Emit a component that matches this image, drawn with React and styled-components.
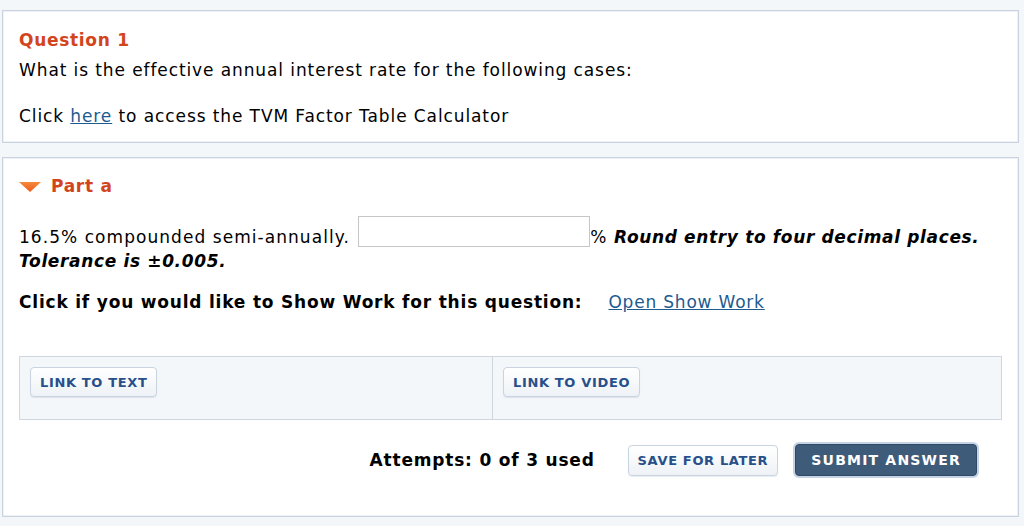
import React from 'react'
import styled, { createGlobalStyle } from 'styled-components'

const GlobalStyle = createGlobalStyle`
  html, body {
    margin: 0;
    padding: 0;
    background: #f4f7fa;
  }
  body {
    font-family: "DejaVu Sans", Verdana, sans-serif;
    color: #000;
  }
`

export default function App() {
  return (
    <Page>
      <GlobalStyle />
      <Card>
        <Heading>Question 1</Heading>
        <Text>What is the effective annual interest rate for the following cases:</Text>
        <Text $gap={23}>
          Click <Link href="#">here</Link> to access the TVM Factor Table Calculator
        </Text>
      </Card>

      <Card $part>
        <PartHeading>
          <Caret width="22" height="10" viewBox="0 0 22 10">
            <defs>
              <linearGradient id="caretFill" x1="0" y1="0" x2="0" y2="1">
                <stop offset="0" stopColor="#f58a3c" />
                <stop offset="1" stopColor="#ee5a1c" />
              </linearGradient>
            </defs>
            <path d="M0 0 H22 L11 10 Z" fill="url(#caretFill)" />
          </Caret>
          Part a
        </PartHeading>

        <Answer>
          16.5% compounded semi-annually. <Entry type="text" />%{' '}
          <Strong>Round entry to four decimal places. Tolerance is ±0.005.</Strong>
        </Answer>

        <ShowWork>
          <b>Click if you would like to Show Work for this question:</b>
          <Link href="#">Open Show Work</Link>
        </ShowWork>

        <Resources>
          <Cell>
            <LightButton>LINK TO TEXT</LightButton>
          </Cell>
          <Cell>
            <LightButton>LINK TO VIDEO</LightButton>
          </Cell>
        </Resources>

        <Footer>
          <Attempts>Attempts: 0 of 3 used</Attempts>
          <LightButton $footer>SAVE FOR LATER</LightButton>
          <SubmitButton>SUBMIT ANSWER</SubmitButton>
        </Footer>
      </Card>
    </Page>
  )
}

const Page = styled.div`
  padding: 10px 5px 10px 2px;
  display: flex;
  flex-direction: column;
  gap: 14px;
`

const Card = styled.section`
  background: #fff;
  border: 1px solid #c9d3df;
  box-shadow: inset 0 0 0 1px #eef2f7;
  padding: ${p => (p.$part ? '17px 16px 16px' : '18px 16px 14px')};
`

const Heading = styled.h2`
  margin: 0 0 7px;
  font-size: 17px;
  line-height: 23px;
  font-weight: bold;
  letter-spacing: 0.7px;
  color: #d2451c;
`

const Text = styled.p`
  margin: ${p => (p.$gap ? `${p.$gap}px 0 0` : '0')};
  font-size: 17px;
  line-height: 23px;
  letter-spacing: 0.9px;
`

const Link = styled.a`
  color: #1d5b8f;
  text-decoration: underline;
`

const PartHeading = styled.h3`
  display: flex;
  align-items: center;
  gap: 10px;
  margin: 0 0 18px;
  font-size: 17px;
  line-height: 23px;
  font-weight: bold;
  letter-spacing: 0.7px;
  color: #d2451c;
`

const Caret = styled.svg`
  display: block;
  flex: none;
`

const Answer = styled.p`
  margin: 0;
  font-size: 17px;
  line-height: 24px;
  letter-spacing: 1.05px;
`

const Entry = styled.input`
  box-sizing: border-box;
  width: 232px;
  height: 31px;
  margin: 0 0 0 2px;
  padding: 2px 4px;
  border: 1px solid #c6c6c6;
  background: #fff;
  vertical-align: text-bottom;
  font: inherit;
`

const Strong = styled.b`
  font-style: italic;
  letter-spacing: 0.65px;
`

const ShowWork = styled.p`
  display: flex;
  gap: 26px;
  margin: 18px 0 0;
  font-size: 17px;
  line-height: 23px;
  letter-spacing: 0.8px;
`

const Resources = styled.div`
  display: grid;
  grid-template-columns: 472px 1fr;
  margin-top: 42px;
  border: 1px solid #cdd6e1;
  background: #f4f7fa;
`

const Cell = styled.div`
  height: 62px;
  box-sizing: border-box;
  padding: 10px 10px;
  & + & {
    border-left: 1px solid #cdd6e1;
  }
`

const LightButton = styled.button`
  box-sizing: border-box;
  height: ${p => (p.$footer ? '31px' : '30px')};
  padding: 0 9px;
  border: 1px solid #c9d4e0;
  border-radius: 4px;
  background: linear-gradient(#ffffff, #eef2f6);
  box-shadow: 0 1px 1px rgba(60, 90, 130, 0.12);
  color: #27508a;
  font-family: "DejaVu Sans", Verdana, sans-serif;
  font-size: 13px;
  font-weight: bold;
  letter-spacing: 0.65px;
  cursor: pointer;
`

const Footer = styled.div`
  display: flex;
  align-items: center;
  justify-content: flex-end;
  gap: 17px;
  height: 80px;
  padding-right: 25px;
  & > ${LightButton} {
    margin-left: 16px;
  }
`

const Attempts = styled.span`
  font-size: 17px;
  font-weight: bold;
  letter-spacing: 0.8px;
`

const SubmitButton = styled.button`
  box-sizing: border-box;
  height: 32px;
  padding: 0 15px;
  border: 1px solid #2f4a68;
  border-radius: 4px;
  background: #3f5b7a;
  box-shadow: 0 0 0 2px #c6d3e2;
  color: #fff;
  font-family: "DejaVu Sans", Verdana, sans-serif;
  font-size: 14px;
  font-weight: bold;
  letter-spacing: 1.2px;
  cursor: pointer;
`
